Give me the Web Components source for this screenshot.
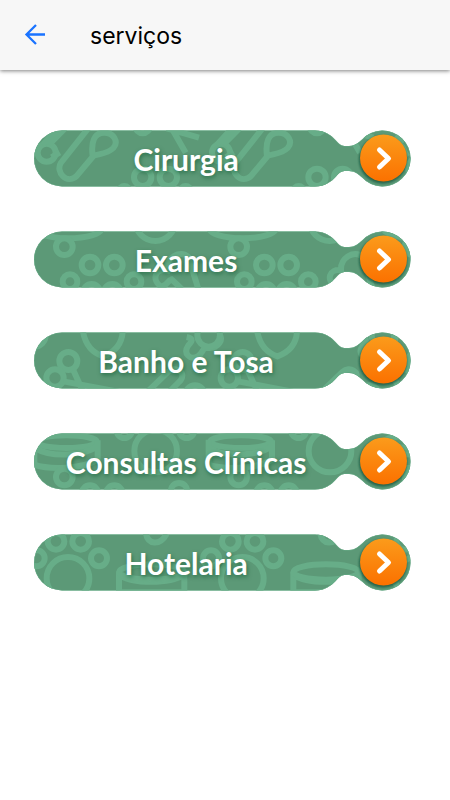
<!DOCTYPE html>
<html lang="pt-BR">
<head>
<meta charset="utf-8">
<meta name="viewport" content="width=device-width, initial-scale=1">
<title>serviços</title>
<style>
body { margin: 0; background: #fff; color: #000; font-family: Inter, "Liberation Sans", sans-serif; }
</style>
</head>
<body>
<services-page>
  <app-bar slot="bar">serviços</app-bar>
  <service-button motif="tools">Cirurgia</service-button>
  <service-button motif="paws">Exames</service-button>
  <service-button motif="bones">Banho e Tosa</service-button>
  <service-button motif="bowls">Consultas Clínicas</service-button>
  <service-button motif="tracks">Hotelaria</service-button>
</services-page>
<script>
class ServicesPage extends HTMLElement {
  constructor() {
    super();
    this.attachShadow({ mode: 'open' }).innerHTML = `
      <style>
        :host { display: block; min-height: 100vh; }
        main { display: flex; flex-direction: column; gap: 44px; padding: 60px 39px 40px 33px; }
      </style>
      <slot name="bar"></slot>
      <main><slot></slot></main>`;
  }
}

class AppBar extends HTMLElement {
  constructor() {
    super();
    this.attachShadow({ mode: 'open' }).innerHTML = `
      <style>
        :host { display: block; }
        header { display: flex; align-items: center; gap: 44px; box-sizing: border-box; min-height: 70px;
          padding: 0 24px; background: #f7f7f7; box-shadow: 0 1px 4px rgba(0,0,0,.5); }
        button { display: flex; margin: 0; padding: 0; border: 0; background: none; color: #1a73ff; cursor: pointer; }
        svg { display: block; width: 22px; height: 22px; }
        h1 { margin: 0; padding-top: 2px; font-size: 23px; line-height: 30px; font-weight: 400; }
      </style>
      <header>
        <button type="button" aria-label="Voltar">
          <svg viewBox="0 0 22 22" fill="none" stroke="currentColor" stroke-width="2.300"><path d="M21 10.500H2.500M12 1L2.500 10.500L12 20"/></svg>
        </button>
        <h1><slot></slot></h1>
      </header>`;
  }
}

/* Each motif is one repeating tile, 523 units wide, at three units per pixel. */
const MOTIFS = {
  tools: `<circle cx="65" cy="98" r="27"/><path d="M52 75L98 25M80 112L104 97M72 74L120 25M192 22L108 128C90 155 125 195 155 168L205 108M203 108C198 70 205 38 238 38C266 38 282 65 265 84C248 101 225 101 203 108"/><circle cx="353" cy="18" r="22"/><path d="M425 25L522 53M443 30L482 98"/><circle cx="353" cy="172" r="26"/><circle cx="430" cy="172" r="26"/><circle cx="298" cy="214" r="16"/><circle cx="482" cy="214" r="16"/>`,
  paws: `<ellipse cx="130" cy="22" rx="100" ry="30"/><circle cx="118" cy="77" r="25"/><circle cx="195" cy="132" r="25"/><circle cx="268" cy="132" r="25"/><circle cx="135" cy="182" r="22"/><circle cx="327" cy="182" r="22"/><circle cx="200" cy="215" r="26"/><circle cx="262" cy="215" r="26"/><circle cx="391" cy="0" r="60"/><path d="M410 198C378 178 390 142 425 148C423 110 465 85 490 108L520 204M405 195C425 200 425 180 440 175L470 204"/>`,
  bones: `<circle cx="28" cy="40" r="34"/><path d="M174 30C184 80 212 96 234 103C268 91 290 70 293 30"/><circle cx="130" cy="117" r="27"/><circle cx="90" cy="168" r="26"/><path d="M145 145L172 204M115 178L280 209M485 45C508 50 500 60 490 70C473 95 495 115 518 103C536 94 530 75 548 78C580 81 600 50 580 36M370 207L430 149C450 132 485 148 467 175L435 207"/><circle cx="510" cy="220" r="30"/>`,
  bowls: `<ellipse cx="124" cy="56" rx="92" ry="19"/><path d="M28 50V125C70 140 170 140 218 110V52M30 75C75 104 180 99 215 70"/><circle cx="118" cy="162" r="25"/><circle cx="195" cy="212" r="25"/><circle cx="268" cy="212" r="25"/><circle cx="298" cy="22" r="23"/><circle cx="485" cy="22" r="23"/><circle cx="392" cy="84" r="64"/><circle cx="462" cy="205" r="25"/>`,
  tracks: `<circle cx="93" cy="52" r="25"/><circle cx="167" cy="52" r="25"/><circle cx="222" cy="103" r="24"/><circle cx="35" cy="103" r="24"/><circle cx="129" cy="163" r="64"/><path d="M362 25C368 65 405 65 425 30M282 145V205H478V145M286 154C320 180 435 180 474 154"/><ellipse cx="380" cy="144" rx="98" ry="23"/>`
};

class ServiceButton extends HTMLElement {
  constructor() {
    super();
    const silhouette = 'M29 .500H282C292 .500 298 5 303 10.500C307 15 309 16 313 16H316C322 16 325 13 329 9.500A28 28 0 1 1 329 47.500C325 44 322 41 316 41H313C309 41 307 42 303 46.500C298 52 292 56.500 282 56.500H29A28 28 0 0 1 29 .500Z';
    this.attachShadow({ mode: 'open' }).innerHTML = `
      <style>
        :host { display: block; }
        button { display: grid; align-items: center; width: 100%; margin: 0; padding: 0; border: 0; background: none;
          color: #fff; font-family: Lato, "Open Sans", sans-serif; cursor: pointer; }
        svg { grid-area: 1 / 1; display: block; width: 100%; height: auto; overflow: visible; }
        span { grid-area: 1 / 1; padding-right: 19%; text-align: center; font-size: 30px; line-height: 36px;
          font-weight: 700; white-space: nowrap; text-shadow: 1px 2px 4px rgba(0,80,40,.55); }
      </style>
      <button type="button">
        <svg viewBox="0 0 378 57" aria-hidden="true">
          <defs>
            <clipPath id="shape"><path d="${silhouette}"/></clipPath>
            <linearGradient id="orange" x2="0" y2="1"><stop stop-color="#fb9b1b"/><stop offset="1" stop-color="#fb7100"/></linearGradient>
            <filter id="soft" x="-20%" y="-20%" width="140%" height="140%"><feGaussianBlur stdDeviation="1.200"/></filter>
          </defs>
          <path d="${silhouette}" fill="#5c9977"/>
          <g clip-path="url(#shape)">
            <g transform="translate(-8 -10) scale(.33333)" fill="none" stroke="#67ad88" stroke-width="18">
              <g id="tile">${MOTIFS[this.getAttribute('motif')] || ''}</g>
              <use href="#tile" x="523"/><use href="#tile" x="1046"/>
            </g>
            <path d="${silhouette}" fill="none" stroke="#67ad88"/>
            <circle cx="350" cy="29.500" r="24" fill="#084c35" opacity=".7" filter="url(#soft)"/>
          </g>
          <circle cx="350.500" cy="28" r="23.500" fill="url(#orange)"/>
          <path d="M346.500 20L355.500 28.500L346.500 37" fill="none" stroke="#fff" stroke-width="5" stroke-linecap="round" stroke-linejoin="round"/>
        </svg>
        <span><slot></slot></span>
      </button>`;
  }
}

customElements.define('app-bar', AppBar);
customElements.define('service-button', ServiceButton);
customElements.define('services-page', ServicesPage);
</script>
</body>
</html>
